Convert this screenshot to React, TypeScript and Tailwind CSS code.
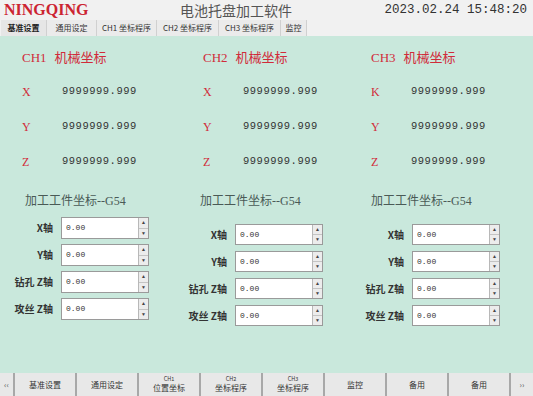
import React from "react";

const cjk = "font-['Noto_Sans_CJK_SC','Noto_Sans',sans-serif]";
const serif = "font-['Liberation_Serif','Noto_Sans_CJK_SC',serif]";
const mono = "font-['Liberation_Mono','Noto_Sans_CJK_SC',monospace]";

const tabs = ["基准设置", "通用设定", "CH1 坐标程序", "CH2 坐标程序", "CH3 坐标程序", "监控"];
const tabWidths = ["w-[46px]", "w-[50px]", "w-[60px]", "w-[62px]", "w-[62px]", "w-[26px]"];

const channels = [
  { title: "CH1", axes: ["X", "Y", "Z"], width: "w-[181px]" },
  { title: "CH2", axes: ["X", "Y", "Z"], width: "w-[168px]" },
  { title: "CH3", axes: ["K", "Y", "Z"], width: "flex-1" },
];

const bottomButtons: Array<[string, string?]> = [
  ["基准设置"],
  ["通用设定"],
  ["CH1", "位置坐标"],
  ["CH2", "坐标程序"],
  ["CH3", "坐标程序"],
  ["监控"],
  ["备用"],
  ["备用"],
];

function SpinInput({ tall }: { tall?: boolean }) {
  return (
    <div className={`flex w-[88px] border border-[#9a9a9a] bg-white ${tall ? "h-[22px]" : "h-[21px]"}`}>
      <div className={`flex flex-1 items-center pl-[4px] text-[8px] text-[#333] ${mono}`}>0.00</div>
      <div className="flex w-[10px] flex-col border-l border-[#b8b8b8] bg-[#ececec]">
        <div className="flex flex-1 items-center justify-center border-b border-[#c4c4c4] text-[5px] leading-none text-[#444]">▲</div>
        <div className="flex flex-1 items-center justify-center text-[5px] leading-none text-[#444]">▼</div>
      </div>
    </div>
  );
}

function G54Block({
  labelWidth,
  titlePad,
  gapTop,
  tall,
  rowGap,
}: {
  labelWidth: string;
  titlePad: string;
  gapTop: string;
  tall?: boolean;
  rowGap: string;
}) {
  const labels = ["X轴", "Y轴", "钻孔 Z轴", "攻丝 Z轴"];
  return (
    <div className="flex flex-col">
      <div className={`${titlePad} whitespace-nowrap text-[12px] leading-[16px] text-[#4a5a56] ${cjk}`}>
        加工工件坐标<span className={serif}>--G54</span>
      </div>
      <div className={`flex flex-col ${gapTop} ${rowGap}`}>
        {labels.map((l) => (
          <div key={l} className="flex items-center">
            <div className={`${labelWidth} flex shrink-0 justify-end pr-[8px]`}>
              <span className={`whitespace-nowrap text-[10px] font-bold leading-none text-[#333] ${cjk}`}>{l}</span>
            </div>
            <SpinInput tall={tall} />
          </div>
        ))}
      </div>
    </div>
  );
}

export default function App() {
  return (
    <div className="flex h-[396px] w-[533px] flex-col overflow-hidden bg-[#c9e8dc]">
      <div className="flex h-[20px] items-center bg-[#f1f1f1] px-[4px]">
        <div className={`w-[150px] text-[16px] font-bold leading-none text-[#cc2431] ${serif}`}>NINGQING</div>
        <div className={`ml-[26px] text-[14px] leading-none text-[#555] ${cjk}`}>电池托盘加工软件</div>
        <div className={`ml-auto pr-[2px] text-[12.5px] leading-none text-[#333] ${mono}`}>2023.02.24 15:48:20</div>
      </div>
      <div className="flex h-[16px] items-stretch bg-[#f1f1f1] pl-[1px]">
        {tabs.map((t, i) => (
          <div
            key={t}
            className={`${tabWidths[i]} flex items-center justify-center border-r border-[#d0d0d0] text-[8px] leading-none ${cjk} ${
              i === 0 ? "bg-[#e6e6e6] font-bold text-[#222]" : "bg-[#ebebeb] text-[#333]"
            }`}
          >
            {t}
          </div>
        ))}
      </div>

      <div className="flex flex-1 flex-col">
        <div className="mt-[13px] flex pl-[22px]">
          {channels.map((c) => (
            <div key={c.title} className={`${c.width} flex flex-col`}>
              <div className={`h-[16px] text-[13px] leading-[16px] text-[#d12b3a] ${cjk}`}>
                <span className={serif}>{c.title}</span>
                <span className="ml-[8px]">机械坐标</span>
              </div>
              {c.axes.map((a) => (
                <div key={a} className="mt-[19px] flex h-[16px] items-center">
                  <span className={`w-[40px] text-[12px] text-[#d12b3a] ${serif}`}>{a}</span>
                  <span className={`text-[10.5px] tracking-[0.5px] text-[#333] ${mono}`}>9999999.999</span>
                </div>
              ))}
            </div>
          ))}
        </div>

        <div className="mt-[22px] flex">
          <div className="w-[200px]">
            <G54Block labelWidth="w-[61px]" titlePad="pl-[25px]" gapTop="mt-[8px]" tall rowGap="gap-[5px]" />
          </div>
          <div className="w-[172px]">
            <G54Block labelWidth="w-[35px]" titlePad="pl-0" gapTop="mt-[15px]" rowGap="gap-[6px]" />
          </div>
          <div className="-ml-[1px] flex-1">
            <G54Block labelWidth="w-[41px]" titlePad="pl-0" gapTop="mt-[15px]" rowGap="gap-[6px]" />
          </div>
        </div>
      </div>

      <div className="flex h-[23px] items-stretch bg-[#e8e8e8]">
        <div className={`flex w-[15px] items-center justify-center border-r-2 border-[#a8a8a8] text-[8px] text-[#555] ${cjk}`}>‹‹</div>
        {bottomButtons.map(([a, b], i) => (
          <div
            key={i}
            className={`flex w-[62px] flex-col items-center justify-center border-r-2 border-[#a8a8a8] text-[#333] ${cjk}`}
          >
            {b ? (
              <>
                <span className="text-[5.5px] leading-[7px]">{a}</span>
                <span className="text-[8px] leading-[10px]">{b}</span>
              </>
            ) : (
              <span className="text-[8px] leading-none">{a}</span>
            )}
          </div>
        ))}
        <div className={`flex flex-1 items-center justify-center text-[8px] text-[#555] ${cjk}`}>››</div>
      </div>
    </div>
  );
}
